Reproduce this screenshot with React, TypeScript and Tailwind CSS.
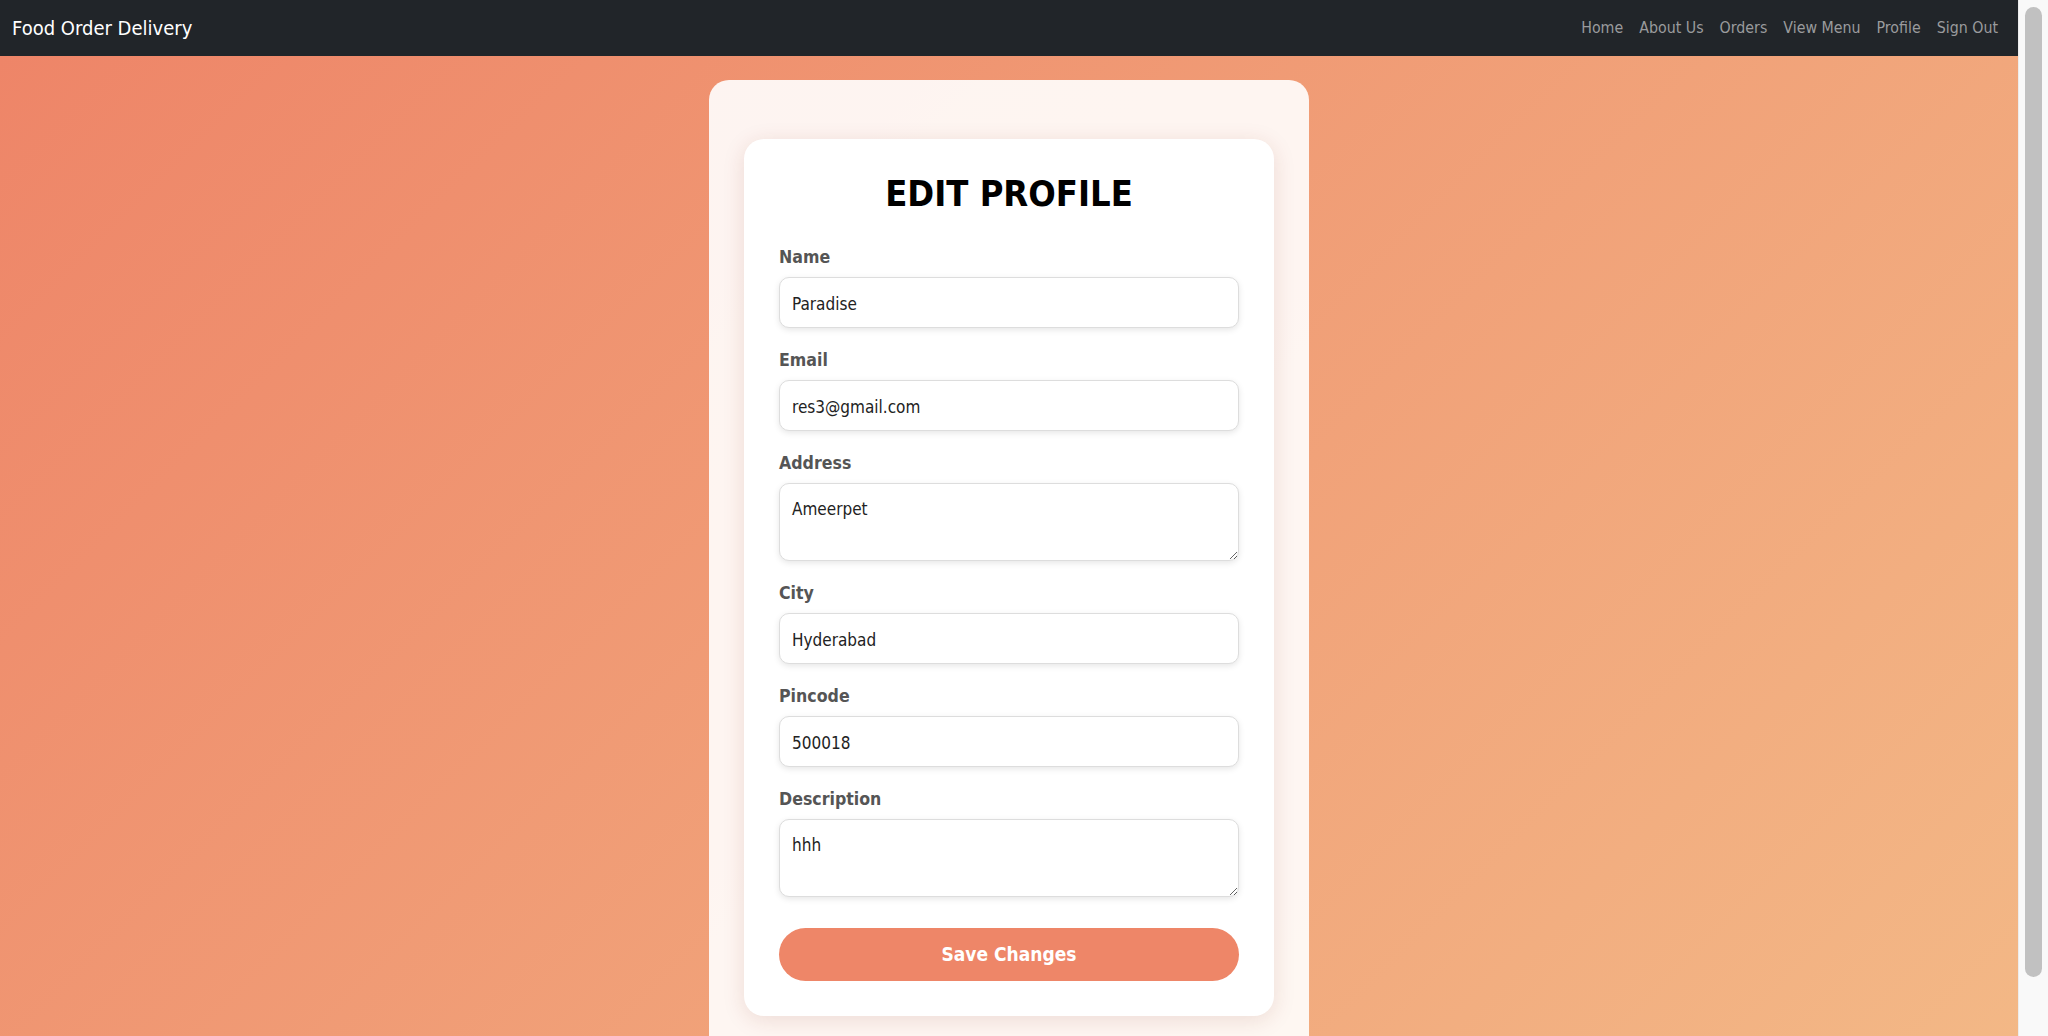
import { useState } from 'react';

const navLinks = ['Home', 'About Us', 'Orders', 'View Menu', 'Profile', 'Sign Out'];

const font = { fontFamily: '"DejaVu Sans Condensed", "DejaVu Sans", sans-serif' };

const Field = ({ label, value, multiline }: { label: string; value: string; multiline?: boolean }) => {
  const [val, setVal] = useState(value);
  return (
    <div className="mb-5">
      <label className="block mb-2 text-[17.6px] leading-6 font-bold text-[#555]">{label}</label>
      {multiline ? (
        <textarea
          value={val}
          onChange={(e) => setVal(e.target.value)}
          className="block w-full h-[78px] px-3 pt-[13px] pb-3 text-[17px] leading-6 text-[#222] bg-white border border-[#ddd] rounded-[10px] shadow-[0_2px_6px_rgba(0,0,0,0.1)] outline-none resize-y"
        />
      ) : (
        <input
          value={val}
          onChange={(e) => setVal(e.target.value)}
          className="block w-full h-[51px] px-3 pt-[2px] text-[17px] text-[#222] bg-white border border-[#ddd] rounded-[10px] shadow-[0_2px_6px_rgba(0,0,0,0.1)] outline-none"
        />
      )}
    </div>
  );
};

const App = () => {
  return (
    <div className="flex h-[1036px] overflow-hidden" style={font}>
      <div className="flex-1 flex flex-col min-w-0">
        {/* Navbar */}
        <nav className="h-14 shrink-0 bg-[#212529] flex items-center justify-between px-3">
          <span className="text-white text-[20px]">Food Order Delivery</span>
          <ul className="flex">
            {navLinks.map((link) => (
              <li key={link}>
                <a href="#" className="block px-2 text-[15.8px] text-[#9a9b9d]">
                  {link}
                </a>
              </li>
            ))}
          </ul>
        </nav>

        {/* Main */}
        <main className="flex-1 bg-[linear-gradient(135deg,#ee8568,#f3b886)] pt-6">
          <div className="mx-auto w-[600px] bg-white/90 rounded-[20px] px-[35px] pt-[59px] pb-10">
            <div className="bg-white rounded-[20px] shadow-[0_4px_22px_rgba(120,40,20,0.13)] px-[35px] pt-[34px] pb-[35px]">
              <h1 className="text-center text-[36px] leading-[41px] font-bold text-black mb-[31px]">EDIT PROFILE</h1>
              <Field label="Name" value="Paradise" />
              <Field label="Email" value="res3@gmail.com" />
              <Field label="Address" value="Ameerpet" multiline />
              <Field label="City" value="Hyderabad" />
              <Field label="Pincode" value="500018" />
              <Field label="Description" value="hhh" multiline />
              <button className="mt-[11px] w-full h-[53px] rounded-full bg-[#ee8668] text-white text-[19px] font-bold">
                Save Changes
              </button>
            </div>
          </div>
        </main>
      </div>

      {/* Scrollbar */}
      <div className="w-[30px] shrink-0 bg-[#f9f9f9] border-l border-[#ececec] pt-[7px] pl-[6px]">
        <div className="w-[17px] h-[970px] rounded-full bg-[#c1c1c1]" />
      </div>
    </div>
  );
};

export default App;
